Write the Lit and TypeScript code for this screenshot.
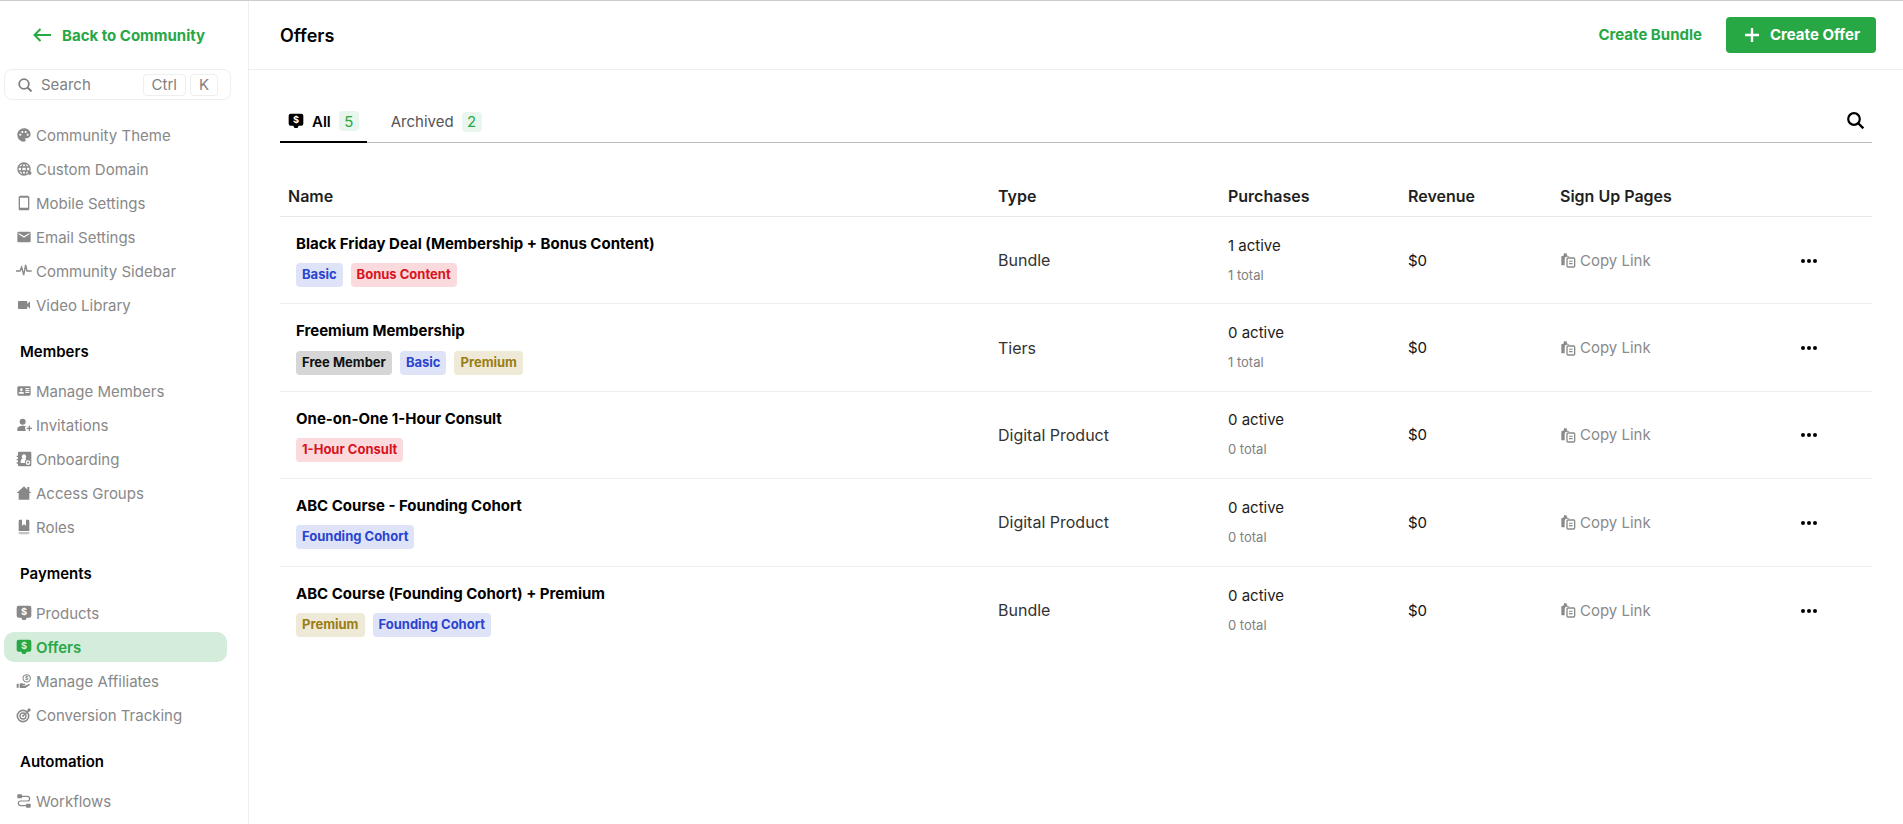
import { LitElement, html, css, svg } from "lit";
import { customElement } from "lit/decorators.js";

const solid = (d: string) => svg`<path d=${d} fill="currentColor"/>`;
const MONEY = svg`<path fill="currentColor" d="M4 1h16a3 3 0 0 1 3 3v12a3 3 0 0 1-3 3h-4l-1.500 3a1 1 0 0 1-1 .6h-3a1 1 0 0 1-1-.6L8 19H4a3 3 0 0 1-3-3V4a3 3 0 0 1 3-3z"/><text x="12" y="15" text-anchor="middle" font-family="Inter" font-weight="700" font-size="14" fill="var(--knock,#fff)">$</text>`;

const ICONS: Record<string, unknown> = {
  palette: solid("M12 2C6.490 2 2 6.490 2 12s4.490 10 10 10c1.380 0 2.500-1.120 2.500-2.500 0-.61-.23-1.200-.64-1.670-.08-.1-.13-.21-.13-.33 0-.28.22-.5.5-.5H16c3.310 0 6-2.690 6-6 0-4.960-4.490-9-10-9zm-5.500 11c-.83 0-1.500-.67-1.500-1.500S5.670 10 6.500 10s1.500.67 1.500 1.500S7.330 13 6.500 13zm3-4C8.670 9 8 8.330 8 7.500S8.670 6 9.500 6s1.500.67 1.500 1.500S10.330 9 9.500 9zm5 0c-.83 0-1.500-.67-1.500-1.500S13.670 6 14.500 6s1.500.67 1.500 1.500S15.330 9 14.500 9zm3 4c-.83 0-1.500-.67-1.500-1.500s.67-1.500 1.500-1.500 1.500.67 1.500 1.500-.67 1.500-1.500 1.500z"),
  globe: svg`<path fill="currentColor" d="M11.990 2C6.470 2 2 6.480 2 12s4.470 10 9.990 10C17.520 22 22 17.520 22 12S17.520 2 11.990 2zm6.930 6h-2.950c-.32-1.250-.78-2.450-1.380-3.560 1.840.63 3.370 1.910 4.330 3.560zM12 4.040c.83 1.200 1.480 2.530 1.910 3.960h-3.820c.43-1.430 1.080-2.760 1.910-3.960zM4.260 14C4.100 13.360 4 12.690 4 12s.1-1.360.26-2h3.380c-.08.66-.14 1.320-.14 2s.06 1.340.14 2H4.260zm.82 2h2.950c.32 1.250.78 2.450 1.380 3.560-1.840-.63-3.370-1.900-4.330-3.560zm2.950-8H5.080c.96-1.660 2.490-2.930 4.330-3.560C8.810 5.550 8.350 6.750 8.030 8zM12 19.960c-.83-1.200-1.480-2.530-1.910-3.960h3.820c-.43 1.430-1.080 2.760-1.910 3.960zM14.340 14H9.660c-.09-.66-.16-1.320-.16-2s.07-1.350.16-2h4.680c.09.65.16 1.320.16 2s-.07 1.340-.16 2zm.25 5.560c.6-1.110 1.060-2.310 1.380-3.560h2.950c-.96 1.650-2.490 2.930-4.330 3.560zM16.360 14c.08-.66.14-1.320.14-2s-.06-1.340-.14-2h3.380c.16.64.26 1.310.26 2s-.1 1.360-.26 2h-3.380z"/><circle cx="20.500" cy="18" r="2.800" fill="currentColor"/>`,
  phone: solid("M17.500 1h-11C5.100 1 4 2.100 4 3.500v17C4 21.900 5.100 23 6.500 23h11c1.400 0 2.500-1.100 2.500-2.500v-17C20 2.100 18.900 1 17.500 1zM18 19H6V4h12v15z"),
  mail: solid("M20 4H4c-1.100 0-1.990.9-1.990 2L2 18c0 1.100.9 2 2 2h16c1.100 0 2-.9 2-2V6c0-1.100-.9-2-2-2zm0 4-8 5-8-5V6l8 5 8-5v2z"),
  pulse: svg`<path d="M0 12h6l2.500-6 3 12 3-15 2 9h7" fill="none" stroke="currentColor" stroke-width="2"/>`,
  video: solid("M17 10.500V7c0-.55-.45-1-1-1H4c-.55 0-1 .45-1 1v10c0 .55.45 1 1 1h12c.55 0 1-.45 1-1v-3.500l4 4v-11l-4 4z"),
  card: solid("M20 5H4c-1.100 0-2 .9-2 2v10c0 1.100.9 2 2 2h16c1.100 0 2-.9 2-2V7c0-1.100-.9-2-2-2zM8 8a2 2 0 1 1 0 4 2 2 0 0 1 0-4zm4 8H4v-1c0-1.300 2.700-2 4-2s4 .7 4 2v1zm8-1h-6v-2h6v2zm0-3h-6v-2h6v2zm0-3h-6V7.500h6V9z"),
  invite: solid("M10 11.500a4.500 4.500 0 1 0 0-9 4.500 4.500 0 0 0 0 9zM10 13c-3.300 0-8 1.600-8 4.500V21h12.500v-3h-1v-3h2.200c-1.600-1.300-4-2-5.700-2zM19 13v3h-3v2h3v3h2v-3h3v-2h-3v-3z"),
  onboard: svg`<path fill="currentColor" fill-rule="evenodd" d="M5 1h16a2 2 0 0 1 2 2v18a2 2 0 0 1-2 2H5a2 2 0 0 1-2-2v-2H1v-2h2v-3H1v-2h2V9H1V7h2V3a2 2 0 0 1 2-2zm7 4a3.500 3.500 0 0 0-2 6.300C8 12.300 7 14 7 16v2h6.500a5 5 0 0 1 2-5.500 6 6 0 0 0-1.600-1.200A3.500 3.500 0 0 0 12 5zm6 9a3.500 3.500 0 1 0 0 7 3.500 3.500 0 0 0 0-7zm-.6 1.500h1.200v1.400H20v1.200h-1.400v1.400h-1.200v-1.400H16v-1.200h1.400z"/>`,
  home: solid("M12 2 1 12h3v10h16V12h3l-3-2.700V3h-3v3.600z"),
  book: svg`<path fill="currentColor" d="M6 1h3v9l3-2 3 2V1h3a2 2 0 0 1 2 2v15H4V3a2 2 0 0 1 2-2z"/><path fill="currentColor" opacity=".5" d="M4 19.500h16V21a2 2 0 0 1-2 2H6a2 2 0 0 1-2-2z"/>`,
  money: MONEY,
  hand: svg`<circle cx="16" cy="8" r="5.500" fill="none" stroke="currentColor" stroke-width="1.600"/><text x="16" y="11" text-anchor="middle" font-family="Inter" font-weight="700" font-size="8" fill="currentColor">$</text><path fill="currentColor" d="M1 16h3v6H1zM5.500 16.200c2-1 3.500-.8 5 0h2.500c1.200 0 1.500 1.800 0 2h-3v.8h4l5-2.500c1.500-.6 2.500 1 1.300 1.900L14 22.500H5.500z"/>`,
  target: svg`<circle cx="10.500" cy="13.500" r="8.500" fill="none" stroke="currentColor" stroke-width="2.400"/><circle cx="10.500" cy="13.500" r="4.500" fill="none" stroke="currentColor" stroke-width="2"/><circle cx="10.500" cy="13.500" r="1.500" fill="currentColor"/><path d="m10.500 13.500 8-8" stroke="currentColor" stroke-width="2"/><path fill="currentColor" d="M17 4l3-3 .8 2.200L23 4l-3 3h-3z"/>`,
  flow: svg`<rect x="2" y="2" width="7" height="6" rx="1" fill="currentColor"/><rect x="15" y="16" width="7" height="6" rx="1" fill="currentColor"/><path d="M9 5h8a3 3 0 0 1 0 7H7a3 3 0 0 0 0 7h8" fill="none" stroke="currentColor" stroke-width="1.800"/>`,
  copy: svg`<path fill="currentColor" d="M2 7a1 1 0 0 1 1-1h2v-2h1V2h4v2h1v2h2a1 1 0 0 1 1 1h-4a3 3 0 0 0-3 3v10H3a1 1 0 0 1-1-1z"/><rect x="10.500" y="9" width="11.500" height="13.500" rx="1.500" fill="none" stroke="currentColor" stroke-width="2"/><path d="M13.500 13.800h5.500M13.500 17.500h5.500" stroke="currentColor" stroke-width="1.700"/>`,
};

const icon = (name: string) =>
  html`<svg class="ico" viewBox="0 0 24 24" aria-hidden="true">${ICONS[name]}</svg>`;

type NavItem = [string, string, boolean?];
const NAV: { title?: string; items: NavItem[] }[] = [
  { items: [["palette", "Community Theme"], ["globe", "Custom Domain"], ["phone", "Mobile Settings"], ["mail", "Email Settings"], ["pulse", "Community Sidebar"], ["video", "Video Library"]] },
  { title: "Members", items: [["card", "Manage Members"], ["invite", "Invitations"], ["onboard", "Onboarding"], ["home", "Access Groups"], ["book", "Roles"]] },
  { title: "Payments", items: [["money", "Products"], ["money", "Offers", true], ["hand", "Manage Affiliates"], ["target", "Conversion Tracking"]] },
  { title: "Automation", items: [["flow", "Workflows"]] },
];

type Tag = [string, string];
const ROWS: { name: string; tags: Tag[]; type: string; active: string; total: string }[] = [
  { name: "Black Friday Deal (Membership + Bonus Content)", tags: [["Basic", "blue"], ["Bonus Content", "red"]], type: "Bundle", active: "1 active", total: "1 total" },
  { name: "Freemium Membership", tags: [["Free Member", "gray"], ["Basic", "blue"], ["Premium", "gold"]], type: "Tiers", active: "0 active", total: "1 total" },
  { name: "One-on-One 1-Hour Consult", tags: [["1-Hour Consult", "red"]], type: "Digital Product", active: "0 active", total: "0 total" },
  { name: "ABC Course - Founding Cohort", tags: [["Founding Cohort", "blue"]], type: "Digital Product", active: "0 active", total: "0 total" },
  { name: "ABC Course (Founding Cohort) + Premium", tags: [["Premium", "gold"], ["Founding Cohort", "blue"]], type: "Bundle", active: "0 active", total: "0 total" },
];

@customElement("app-root")
export class AppRoot extends LitElement {
  static styles = css`
    :host {
      display: block;
      height: 100vh;
      overflow: hidden;
      font-family: Inter, "Noto Sans", sans-serif;
      font-size: 15px;
      color: #000;
      background: #fff;
    }
    .page { display: flex; height: 100%; border-top: 1px solid #ccc; box-sizing: border-box; }
    .ico { width: 16px; height: 16px; flex: none; display: block; }

    aside { width: 249px; flex: none; box-sizing: border-box; border-right: 1px solid #eee; overflow: hidden; }
    .back { display: flex; align-items: center; height: 68px; padding-left: 33px; gap: 11px; color: #28a745; font-weight: 700; }
    .back svg { width: 18px; height: 14px; flex: none; }
    .search { display: flex; align-items: center; margin-left: 4px; width: 227px; height: 31px; box-sizing: border-box; border: 1px solid #eee; border-radius: 8px; padding: 0 12px 0 13px; color: #808080; }
    .search .mag { width: 14px; height: 14px; margin-right: 9px; flex: none; }
    .search .lbl { flex: 1; }
    kbd { font: inherit; display: flex; align-items: center; justify-content: center; height: 22px; box-sizing: border-box; border: 1px solid #eee; border-radius: 4px; padding: 0 8px; margin-left: 4px; }
    nav { padding-top: 16px; }
    .group + .group { margin-top: 15px; }
    .gtitle { font-weight: 600; height: 34px; line-height: 34px; padding-left: 20px; margin-bottom: 7px; color: #000; }
    .item { display: flex; align-items: center; gap: 4px; height: 30px; margin: 4px 0 4px 4px; width: 223px; padding-left: 12px; box-sizing: border-box; border-radius: 10px; color: #888; --knock: #fff; }
    .item.on { background: #d4ecda; color: #28a745; font-weight: 600; --knock: #d4ecda; }

    main { flex: 1; min-width: 0; }
    header { display: flex; align-items: center; height: 69px; box-sizing: border-box; border-bottom: 1px solid #eee; padding: 0 27px 1px 31px; }
    h1 { margin: 0; padding-top: 2px; font-size: 18px; font-weight: 600; flex: 1; }
    .link { color: #28a745; font-weight: 700; margin-right: 24px; }
    .cta { display: flex; align-items: center; gap: 11px; height: 36px; box-sizing: border-box; padding: 0 16px 0 19px; background: #28a745; color: #fff; border-radius: 4px; font-weight: 700; }
    .cta svg { width: 14px; height: 14px; }

    .content { padding: 0 31px; }
    .tabs { display: flex; align-items: flex-end; height: 73px; box-sizing: border-box; border-bottom: 1px solid #bbb; position: relative; }
    .tab { display: flex; align-items: center; height: 36px; box-sizing: border-box; padding: 0 8px 5px 8px; color: #555; }
    .tab .ico { margin-right: 8px; --knock: #fff; }
    .tab.on { color: #000; font-weight: 600; border-bottom: 2px solid #000; margin-bottom: -1px; height: 37px; }
    .tab + .tab { margin-left: 16px; }
    .count { display: flex; align-items: center; justify-content: center; width: 20px; height: 20px; margin-left: 8px; border-radius: 4px; background: #e9f6ee; color: #28a745; font-weight: 400; }
    .tabs .find { position: absolute; right: 8px; top: 42px; width: 17px; height: 17px; }

    .grid { display: grid; grid-template-columns: 710px 230px 180px 152px 1fr; }
    .head { height: 74px; border-bottom: 1px solid #e8e8e8; align-items: flex-end; padding-bottom: 10px; box-sizing: border-box; color: #1f1f1f; font-weight: 600; font-size: 16px; }
    .head > div { padding-left: 8px; line-height: 20px; }
    .row { height: 87.4px; box-sizing: border-box; border-bottom: 1px solid #eee; align-items: center; color: #333; }
    .row:last-child { border-bottom: none; }
    .row > div { padding-left: 8px; }
    .row > .namecell { padding-left: 16px; align-self: start; padding-top: 16px; }
    .row > .type { font-size: 16px; }
    .name { font-weight: 700; color: #000; line-height: 21px; margin-bottom: 9.3px; }
    .tags { display: flex; gap: 8px; }
    .tag { display: block; height: 24px; line-height: 23px; padding: 0 6px; border-radius: 4px; font-size: 13px; font-weight: 700; }
    .tag.blue { background: #dfe3f8; color: #2a44cf; }
    .tag.red { background: #fadadd; color: #d81420; }
    .tag.gray { background: #d6d6d6; color: #111; }
    .tag.gold { background: #efe9d8; color: #9a7d14; }
    .active { color: #1c1c1c; line-height: 20px; margin-bottom: 9px; }
    .total { color: #808080; font-size: 13px; line-height: 20px; }
    .rev { color: #111; }
    .actions { display: flex; align-items: center; justify-content: space-between; padding-right: 55px; color: #8a8a8a; }
    .copy { display: flex; align-items: center; gap: 4px; }
    .dots { display: flex; gap: 2px; margin-top: 1px; }
    .dots i { width: 4px; height: 4px; border-radius: 50%; background: #000; }
  `;

  render() {
    return html`<div class="page">
      <aside>
        <div class="back">
          <svg viewBox="0 0 18 14"><path d="M18 7H2M7.500 1 1.500 7l6 6" fill="none" stroke="currentColor" stroke-width="2"/></svg>
          Back to Community
        </div>
        <div class="search">
          <svg class="mag" viewBox="0 0 14 14"><circle cx="6" cy="6" r="4.800" fill="none" stroke="currentColor" stroke-width="1.800"/><path d="m9.500 9.500 4 4" stroke="currentColor" stroke-width="2"/></svg>
          <span class="lbl">Search</span><kbd>Ctrl</kbd><kbd>K</kbd>
        </div>
        <nav>
          ${NAV.map((g) => html`<div class="group">
            ${g.title ? html`<div class="gtitle">${g.title}</div>` : ""}
            ${g.items.map(([ic, label, on]) => html`<div class="item ${on ? "on" : ""}">${icon(ic)}${label}</div>`)}
          </div>`)}
        </nav>
      </aside>
      <main>
        <header>
          <h1>Offers</h1>
          <span class="link">Create Bundle</span>
          <div class="cta">
            <svg viewBox="0 0 14 14"><path d="M7 0v14M0 7h14" stroke="currentColor" stroke-width="2.400"/></svg>
            Create Offer
          </div>
        </header>
        <div class="content">
          <div class="tabs">
            <div class="tab on">${icon("money")}All<span class="count">5</span></div>
            <div class="tab">Archived<span class="count">2</span></div>
            <svg class="find" viewBox="0 0 17 17"><circle cx="7" cy="7" r="5.800" fill="none" stroke="currentColor" stroke-width="2.200"/><path d="m11 11 5.300 5.300" stroke="currentColor" stroke-width="2.400"/></svg>
          </div>
          <div class="grid head"><div>Name</div><div>Type</div><div>Purchases</div><div>Revenue</div><div>Sign Up Pages</div></div>
          ${ROWS.map((r) => html`<div class="grid row">
            <div class="namecell">
              <div class="name">${r.name}</div>
              <div class="tags">${r.tags.map(([t, c]) => html`<span class="tag ${c}">${t}</span>`)}</div>
            </div>
            <div class="type">${r.type}</div>
            <div><div class="active">${r.active}</div><div class="total">${r.total}</div></div>
            <div class="rev">$0</div>
            <div class="actions">
              <span class="copy">${icon("copy")}Copy Link</span>
              <span class="dots"><i></i><i></i><i></i></span>
            </div>
          </div>`)}
        </div>
      </main>
    </div>`;
  }
}
